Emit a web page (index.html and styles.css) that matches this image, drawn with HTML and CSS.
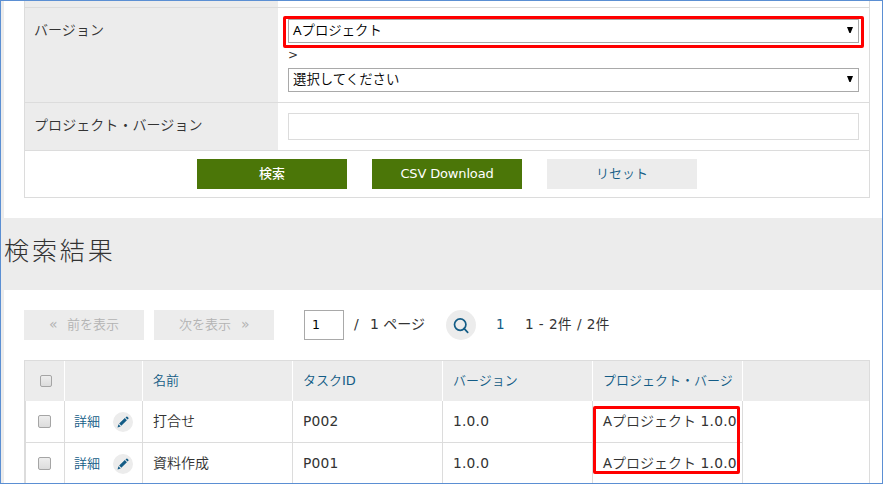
FILE: index.html
```html
<!DOCTYPE html>
<html lang="ja">
<head>
<meta charset="utf-8">
<title>検索結果</title>
<link rel="stylesheet" href="styles.css">
</head>
<body>
<svg width="0" height="0" class="defs">
  <symbol id="pencil" viewBox="0 0 20 20"><path d="M4.5 15.5l1-3.2 2.2 2.2zM6.2 11.6l5.6-5.5 2.1 2.1-5.6 5.6zM12.5 5.5l.9-.8q.5-.4 1 0l1 1q.4.5 0 1l-.8.8z" fill="#135c86"/></symbol>
  <symbol id="arrow" viewBox="0 0 6 6"><path d="M0 0h6L3.6 6H2.4z"/></symbol>
</svg>
<div class="page">
  <section class="search">
    <div class="form">
      <div class="spacer"></div>
      <div class="row version">
        <div class="label">バージョン</div>
        <div class="field">
          <div class="select marked"><span><span class="latin">A</span>プロジェクト</span><svg width="6" height="6"><use href="#arrow"/></svg></div>
          <div class="gt">&gt;</div>
          <div class="select"><span>選択してください</span><svg width="6" height="6"><use href="#arrow"/></svg></div>
        </div>
      </div>
      <div class="row project">
        <div class="label">プロジェクト・バージョン</div>
        <div class="field"><input class="input" type="text"></div>
      </div>
      <div class="actions">
        <button class="btn">検索</button>
        <button class="btn csv">CSV Download</button>
        <button class="btn reset">リセット</button>
      </div>
    </div>
  </section>
  <h2 class="title">検索結果</h2>
  <section class="results">
    <div class="pager">
      <span class="nav"><i>«</i>前を表示</span>
      <span class="nav next">次を表示<i>»</i></span>
      <span class="pageno">1</span>
      <span class="slash">/</span>
      <span class="pages">1 ページ</span>
      <span class="find"><svg width="30" height="30" viewBox="0 0 30 30" fill="none" stroke="#135c86" stroke-width="1.7"><circle cx="14.2" cy="14.6" r="5.7"/><path d="M18 18.4l3.7 4" stroke-linecap="round"/></svg></span>
      <span class="current">1</span>
      <span class="count">1 - 2件 / 2件</span>
    </div>
    <div class="table">
      <div class="cells head">
        <div><b class="check small"></b></div><div></div><div>名前</div><div class="id">タスク<span>ID</span></div><div>バージョン</div><div>プロジェクト・バージ</div><div></div>
      </div>
      <div class="cells">
        <div><b class="check"></b></div><div class="ops">詳細<svg width="20" height="20"><use href="#pencil"/></svg></div><div>打合せ</div><div class="num">P002</div><div class="num">1.0.0</div><div class="proj"><b class="latin">A</b>プロジェクト <span>1.0.0</span></div><div></div>
      </div>
      <div class="cells">
        <div><b class="check"></b></div><div class="ops">詳細<svg width="20" height="20"><use href="#pencil"/></svg></div><div>資料作成</div><div class="num">P001</div><div class="num">1.0.0</div><div class="proj"><b class="latin">A</b>プロジェクト <span>1.0.0</span></div><div></div>
      </div>
      <div class="highlight"></div>
    </div>
  </section>
</div>
</body>
</html>
```
FILE: styles.css
```css
* { box-sizing: border-box; }
body {
  margin: 0;
  height: 484px;
  overflow: hidden;
  background: #ececec;
  color: #333;
  font: 14px/20px "Noto Sans", "Noto Sans CJK JP", sans-serif;
  font-weight: 350;
}
.defs { position: absolute; }
.latin { font-weight: 400; }
.page { height: 484px; padding-left: 4px; overflow: hidden; }
.page::after {
  content: "";
  position: fixed;
  z-index: 5;
  inset: 0;
  border: 1px solid #5b8fd3;
  pointer-events: none;
}
.search { height: 218px; padding: 0 13px 0 20px; background: #fff; }
.form { height: 198px; border: 1px solid #dcdcdc; border-top: 0; }
.spacer { height: 7px; width: 253px; background: #ececec; }
.row { display: grid; grid-template-columns: 253px 1fr; border-top: 1px solid #dcdcdc; }
.version { height: 95px; }
.project { height: 48px; }
.label { padding: 12px 9px; background: #ececec; letter-spacing: .07px; }
.field { padding: 11px 10px 0; }
.project .field { padding-top: 10px; }
.select {
  position: relative;
  display: flex;
  align-items: center;
  justify-content: space-between;
  height: 24px;
  padding: 0 5px 2px 4px;
  border: 1px solid #a9a9a9;
  background: #fff;
  color: #000;
  font-size: 13.4px;
}
.marked::after {
  content: "";
  position: absolute;
  inset: -4px -6px -6px;
  border: 3px solid #f00;
  border-radius: 2px;
}
.gt { height: 25px; font: 400 12px/25px "DejaVu Sans", sans-serif; }
.input { display: block; width: 100%; height: 27px; border: 1px solid #dcdcdc; background: #fff; }
.actions {
  display: flex;
  gap: 25px;
  height: 47px;
  padding: 8px 0 0 172px;
  border-top: 1px solid #dcdcdc;
}
.btn {
  width: 150px;
  height: 30px;
  padding: 0 0 2px;
  border: 0;
  background: #4b7608;
  color: #fff;
  font: 500 13px/28px "Noto Sans", "Noto Sans CJK JP", sans-serif;
}
.csv { padding-bottom: 0; font-family: "DejaVu Sans", sans-serif; font-weight: 400; letter-spacing: -.15px; }
.reset { background: #ececec; color: #135c86; font-weight: 350; }
.title {
  height: 72px;
  margin: 0;
  font-size: 25px;
  font-weight: 300;
  line-height: 65px;
  letter-spacing: 2.9px;
}
.results { height: 194px; padding: 20px 13px 0 20px; background: #fff; }
.pager { display: flex; height: 50px; line-height: 28px; }
.nav {
  width: 120px;
  height: 30px;
  margin-right: 10px;
  padding-left: 25px;
  background: #ececec;
  color: #b3b3b3;
  font-size: 13px;
}
.nav i { display: inline-block; width: 18px; font: 400 14px/20px "DejaVu Sans", sans-serif; }
.nav.next i { margin-left: 10px; width: 10px; }
.pageno {
  width: 40px;
  height: 30px;
  margin-left: 20px;
  padding-left: 7px;
  border: 1px solid #a9a9a9;
  color: #000;
  font: 400 12.5px/28px "DejaVu Sans", sans-serif;
}
.slash { width: 16px; margin-left: 10px; font-family: "DejaVu Sans", sans-serif; font-weight: 400; }
.pages { width: 76px; font-family: "DejaVu Sans", "Noto Sans CJK JP", sans-serif; font-weight: 400; }
.find { width: 30px; height: 30px; border-radius: 50%; background: #ececec; }
.find svg { display: block; }
.current { width: 29px; margin-left: 20px; color: #135c86; font: 400 13.5px/28px "DejaVu Sans", sans-serif; }
.count { font-family: "DejaVu Sans", "Noto Sans CJK JP", sans-serif; font-size: 13.6px; font-weight: 400; letter-spacing: .45px; }
.table { position: relative; border: 1px solid #dcdcdc; border-bottom: 0; height: 124px; }
.cells { display: grid; grid-template-columns: 40px 78px 150px 150px 150px 150px 1fr; height: 42px; }
.cells > div {
  padding: 10px 0 0 10px;
  border-right: 1px solid #dcdcdc;
  border-bottom: 1px solid #dcdcdc;
  white-space: nowrap;
}
.cells > div:last-child { border: 0; }
.cells > div:first-child { box-shadow: inset 1px 0 #dcdcdc; }
.head { height: 40px; color: #135c86; font-size: 13px; background: #ececec; }
.head > div { padding-top: 9px; border-bottom: 0; border-color: #fff; }
.head > div:first-child { box-shadow: none; }
.head .id span { font-family: "DejaVu Sans", sans-serif; font-weight: 400; }
.cells > div:first-child { padding: 14px 0 0 13px; }
.head > div:first-child { padding: 14px 0 0 15px; }
.check {
  display: block;
  width: 13px;
  height: 13px;
  border: 1px solid #a5a5a5;
  border-radius: 2px;
  background: linear-gradient(#eee, #dcdcdc);
}
.small { width: 12px; height: 12px; }
.cells .ops { display: flex; gap: 13px; padding-left: 9px; color: #135c86; font-size: 13px; }
.ops svg { margin-top: 1px; border-radius: 50%; background: #ececec; }
.num, .proj span { font-family: "DejaVu Sans", sans-serif; font-size: 13.8px; font-weight: 400; letter-spacing: .2px; }
.proj span { margin-left: 1px; }
.highlight {
  position: absolute;
  left: 568px;
  top: 45px;
  width: 147px;
  height: 68px;
  border: 3px solid #f00;
  border-radius: 2px;
}
```
